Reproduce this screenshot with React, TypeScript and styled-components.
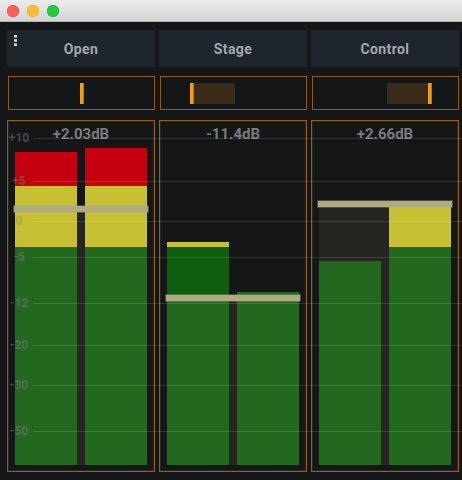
import React from 'react'
import styled, { createGlobalStyle } from 'styled-components'

const GlobalStyle = createGlobalStyle`
  html, body {
    margin: 0;
    padding: 0;
    background: #151618;
  }
  body {
    font-family: Roboto, 'Liberation Sans', sans-serif;
  }
  * {
    box-sizing: border-box;
  }
`

const COLORS = {
  red: '#c5000f',
  yellow: '#c7c032',
  green: '#22681f',
  darkGreen: '#0f5e10'
}

type Segment = { color: keyof typeof COLORS; h: number }

type Channel = {
  name: string
  pan: number
  level: string
  peak: number
  bars: Segment[][]
}

const CHANNELS: Channel[] = [
  {
    name: 'Open',
    pan: 50.3,
    level: '+2.03dB',
    peak: 259,
    bars: [
      [
        { color: 'red', h: 34 },
        { color: 'yellow', h: 61 },
        { color: 'green', h: 218 }
      ],
      [
        { color: 'red', h: 38 },
        { color: 'yellow', h: 61 },
        { color: 'green', h: 218 }
      ]
    ]
  },
  {
    name: 'Stage',
    pan: 21.5,
    level: '-11.4dB',
    peak: 170,
    bars: [
      [
        { color: 'yellow', h: 5 },
        { color: 'darkGreen', h: 48 },
        { color: 'green', h: 170 }
      ],
      [{ color: 'green', h: 173 }]
    ]
  },
  {
    name: 'Control',
    pan: 81,
    level: '+2.66dB',
    peak: 264,
    bars: [
      [{ color: 'green', h: 204 }],
      [
        { color: 'yellow', h: 40 },
        { color: 'green', h: 218 }
      ]
    ]
  }
]

const SCALE = [
  { label: '+10', y: 18 },
  { label: '+5', y: 61 },
  { label: '0', y: 101 },
  { label: '-5', y: 137 },
  { label: '-12', y: 183 },
  { label: '-20', y: 225 },
  { label: '-30', y: 265 },
  { label: '-50', y: 311 }
]

const PAN_CENTER = 50.8

const Window = styled.div`
  width: 462px;
  height: 480px;
  overflow: hidden;
  background: #151618;
`

const TitleBar = styled.div`
  height: 22px;
  display: flex;
  align-items: center;
  gap: 8px;
  padding-left: 7px;
  background: linear-gradient(#ebebeb, #d5d5d5);
  border-bottom: 1px solid #b3b3b3;
`

const Light = styled.span<{ $color: string; $edge: string }>`
  width: 12px;
  height: 12px;
  border-radius: 50%;
  background: ${(p) => p.$color};
  box-shadow: inset 0 0 0 0.5px ${(p) => p.$edge};
`

const Content = styled.div`
  padding: 8px 3px 0 7px;
`

const Row = styled.div`
  display: grid;
  grid-template-columns: repeat(3, 148px);
  column-gap: 4px;
`

const Button = styled.div`
  position: relative;
  height: 37px;
  display: flex;
  align-items: center;
  justify-content: center;
  background: #1e252d;
  color: #a2a8b0;
  font-weight: 700;
  font-size: 14px;
  letter-spacing: 0.4px;
`

const MenuDots = styled.svg`
  position: absolute;
  left: 7px;
  top: 5px;
`

const PanRow = styled(Row)`
  margin-top: 9px;
`

const PanBox = styled.div`
  position: relative;
  height: 34px;
  margin-left: 1px;
  border: 1px solid #8d5c17;
`

const PanFill = styled.div`
  position: absolute;
  top: 6px;
  bottom: 5px;
  background: #3a2c19;
`

const PanMarker = styled.div`
  position: absolute;
  top: 6px;
  bottom: 5px;
  width: 4px;
  margin-left: -2px;
  background: #f39c1b;
  border-right: 1px solid #b8730f;
`

const MeterRow = styled(Row)`
  position: relative;
  margin-top: 10px;
  height: 352px;
`

const Panel = styled.div`
  display: flex;
  flex-direction: column;
  border: 1px solid #93601a;
  box-shadow: inset 0 0 0 1px rgba(147, 96, 26, 0.22);
  padding: 0 7px 6px;
`

const Level = styled.div`
  height: 20px;
  padding-top: 4px;
  line-height: 18px;
  text-align: center;
  color: #7b7b7b;
  font-weight: 700;
  font-size: 15px;
`

const Meter = styled.div`
  position: relative;
  flex: 1;
  display: flex;
  align-items: flex-end;
  gap: 8px;
`

const Track = styled.div`
  position: absolute;
  left: 0;
  right: 0;
  bottom: 0;
  background: #262522;
`

const Bar = styled.div`
  position: relative;
  flex: 1;
  display: flex;
  flex-direction: column;
`

const Fill = styled.div<{ $color: string }>`
  background: ${(p) => p.$color};
`

const PeakHold = styled.div`
  position: absolute;
  left: -1px;
  right: -1px;
  height: 6px;
  background: #aeab82;
  box-shadow: 0 0 0 1px rgba(174, 171, 130, 0.35);
`

const Scale = styled.div`
  position: absolute;
  left: 0;
  right: -3px;
  top: 0;
  bottom: 0;
  pointer-events: none;
`

const Mark = styled.div`
  position: absolute;
  left: 0;
  right: 0;
  height: 0;
  display: flex;
  align-items: center;
`

const MarkLabel = styled.span`
  width: 24px;
  text-align: center;
  color: rgba(135, 135, 135, 0.45);
  font-weight: 700;
  font-size: 12px;
  line-height: 12px;
`

const MarkLine = styled.span`
  flex: 1;
  margin-left: 2px;
  height: 1px;
  background: rgba(255, 255, 255, 0.13);
`

const PanSlider = ({ value }: { value: number }) => {
  const from = Math.min(value, PAN_CENTER)
  const to = Math.max(value, PAN_CENTER)
  return (
    <PanBox>
      {Math.abs(value - PAN_CENTER) > 2 && <PanFill style={{ left: `${from}%`, width: `${to - from}%` }} />}
      <PanMarker style={{ left: `${value}%` }} />
    </PanBox>
  )
}

const App = () => {
  return (
    <Window>
      <GlobalStyle />
      <TitleBar>
        <Light $color='#fd5f57' $edge='#e0443e' />
        <Light $color='#febc2e' $edge='#dea123' />
        <Light $color='#29c841' $edge='#1aab29' />
      </TitleBar>
      <Content>
        <Row>
          {CHANNELS.map((ch, idx) => (
            <Button key={ch.name}>
              {idx === 0 && (
                <MenuDots width='3' height='11' viewBox='0 0 3 11'>
                  <rect x='0' y='0' width='3' height='2.5' fill='#d6dce3' />
                  <rect x='0' y='4.2' width='3' height='2.5' fill='#d6dce3' />
                  <rect x='0' y='8.4' width='3' height='2.5' fill='#d6dce3' />
                </MenuDots>
              )}
              {ch.name}
            </Button>
          ))}
        </Row>
        <PanRow>
          {CHANNELS.map((ch) => (
            <PanSlider key={ch.name} value={ch.pan} />
          ))}
        </PanRow>
        <MeterRow>
          {CHANNELS.map((ch) => (
            <Panel key={ch.name}>
              <Level>{ch.level}</Level>
              <Meter>
                <Track style={{ height: ch.peak }} />
                {ch.bars.map((segs, i) => (
                  <Bar key={i}>
                    {segs.map((s, j) => (
                      <Fill key={j} $color={COLORS[s.color]} style={{ height: s.h }} />
                    ))}
                  </Bar>
                ))}
                <PeakHold style={{ bottom: ch.peak - 6 }} />
              </Meter>
            </Panel>
          ))}
          <Scale>
            {SCALE.map((m) => (
              <Mark key={m.label} style={{ top: m.y }}>
                <MarkLabel>{m.label}</MarkLabel>
                <MarkLine />
              </Mark>
            ))}
          </Scale>
        </MeterRow>
      </Content>
    </Window>
  )
}

export default App
